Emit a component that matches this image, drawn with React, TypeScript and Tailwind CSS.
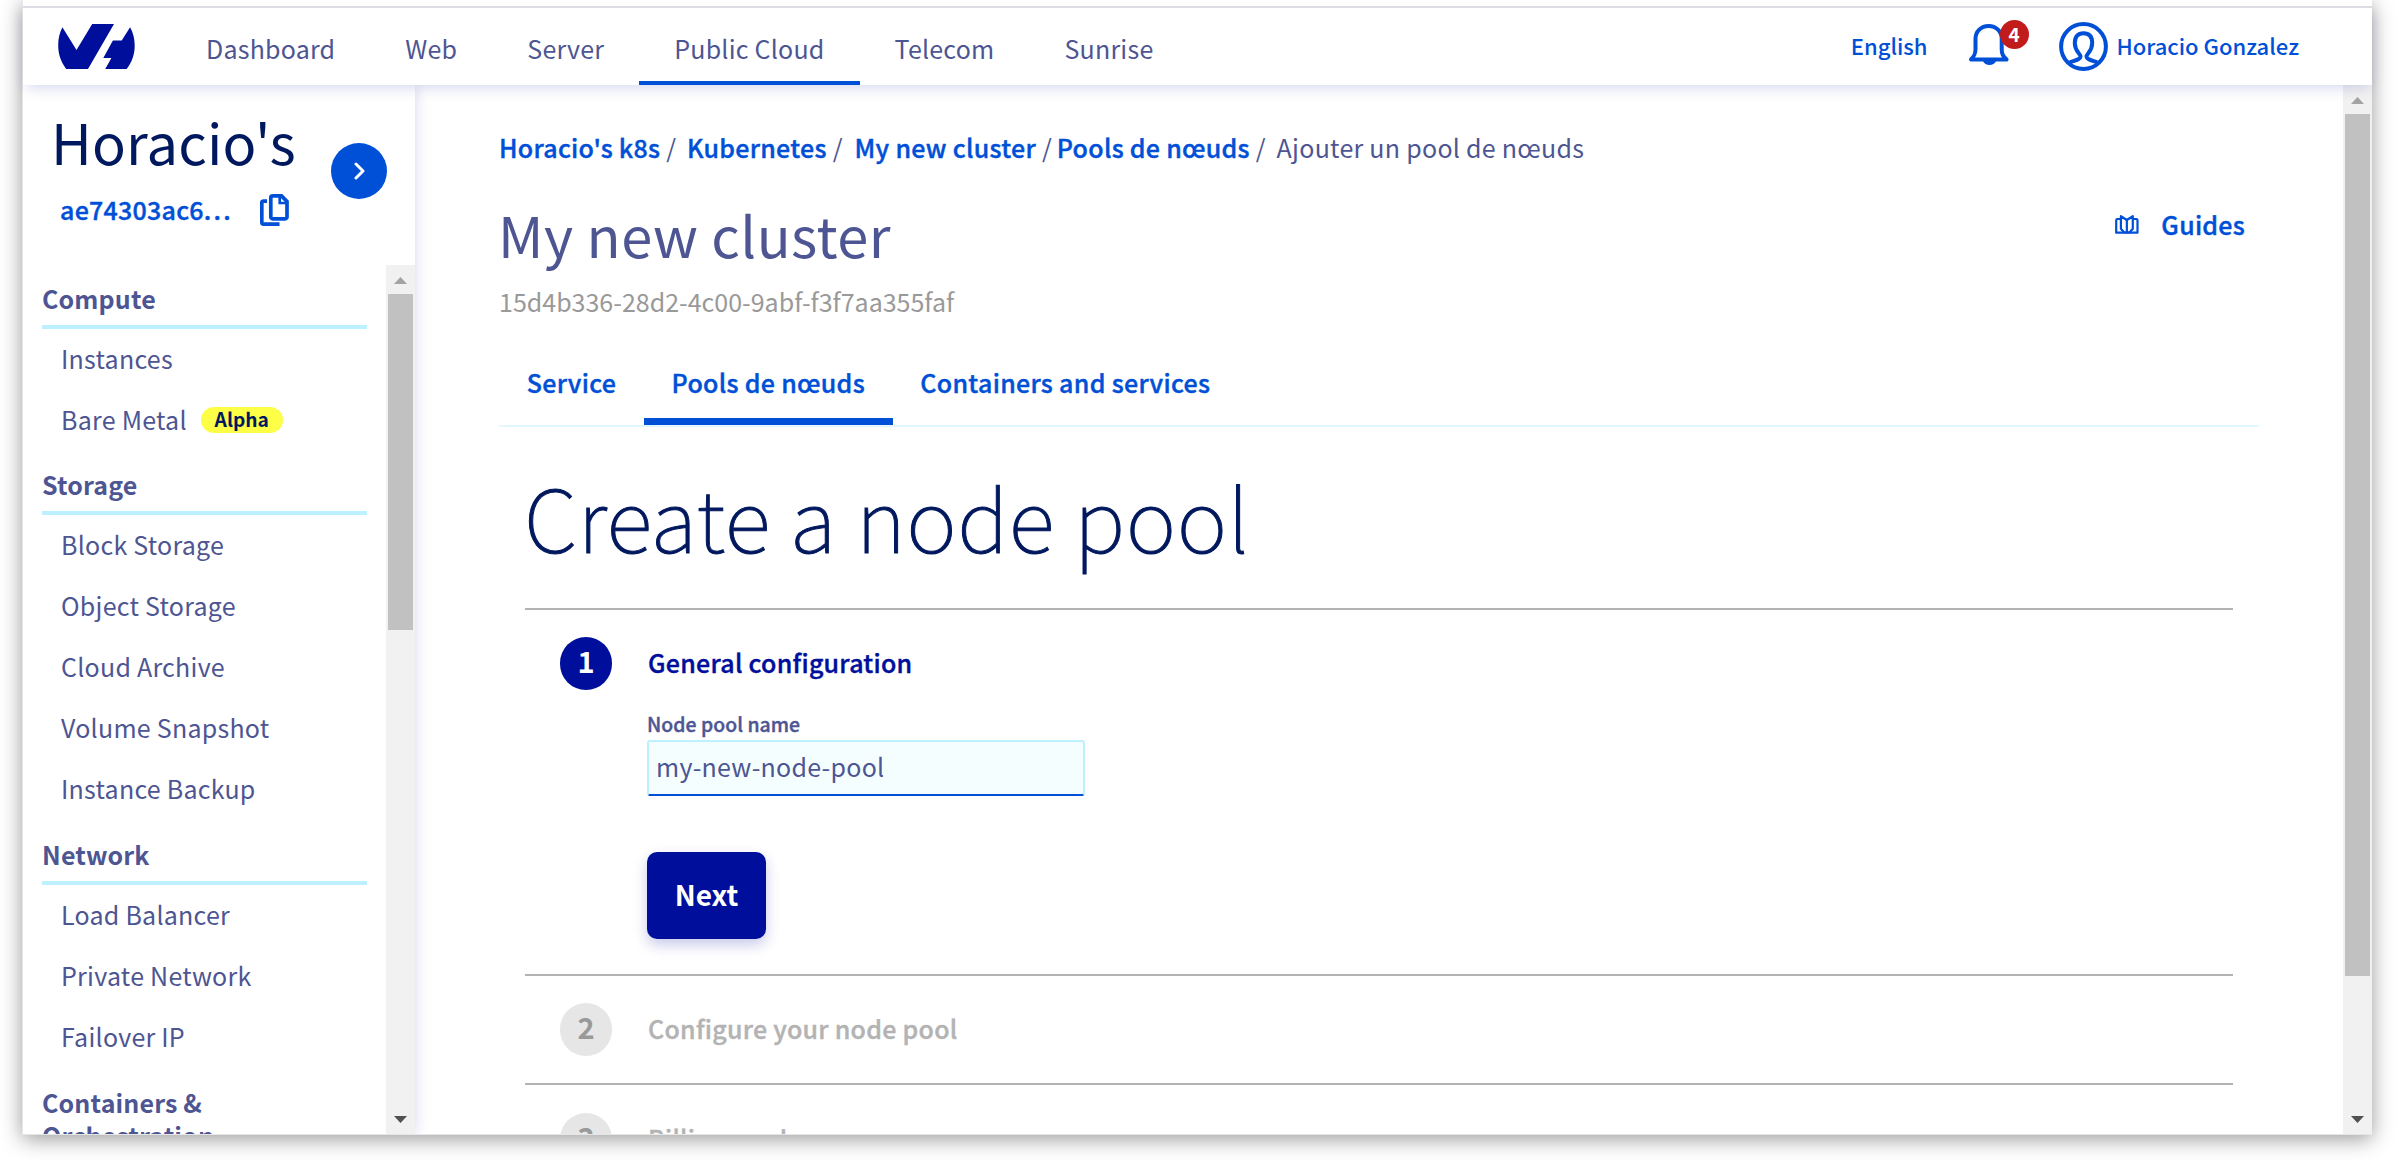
import React from 'react';

type MenuItem = { label: string; badge?: string };
type MenuSection = { title: string; items: MenuItem[]; spacing: string };

const NAV = ['Dashboard', 'Web', 'Server', 'Public Cloud', 'Telecom', 'Sunrise'];

const SECTIONS: MenuSection[] = [
  {
    title: 'Compute',
    spacing: 'mt-0',
    items: [{ label: 'Instances' }, { label: 'Bare Metal', badge: 'Alpha' }],
  },
  {
    title: 'Storage',
    spacing: 'mt-[21px]',
    items: [
      { label: 'Block Storage' },
      { label: 'Object Storage' },
      { label: 'Cloud Archive' },
      { label: 'Volume Snapshot' },
      { label: 'Instance Backup' },
    ],
  },
  {
    title: 'Network',
    spacing: 'mt-[22px]',
    items: [{ label: 'Load Balancer' }, { label: 'Private Network' }, { label: 'Failover IP' }],
  },
  { title: 'Containers & Orchestration', spacing: 'mt-[22px]', items: [] },
];

const SEMI = 'font-medium [-webkit-text-stroke:0.4px_currentColor]';

function Logo() {
  return (
    <svg width="77" height="45" viewBox="0 0 77 45" fill="#000e9c" className="block shrink-0">
      <path d="M4.4 3.3 18.5 26 34.2 0H56L30 45H8.2C2.5 37 .2 30 .2 21 .2 14 1.8 8.500 4.400 3.300Z" />
      <path d="M72.100 3.300C75 8.500 76.700 14.500 76.700 21.500 76.700 30 74.200 38 68.700 45H47.200L53.400 34H45.300L54.900 16.500H63.700Z" />
    </svg>
  );
}

function BellIcon() {
  return (
    <svg width="40" height="41" viewBox="0 0 40 41" fill="none" className="block">
      <path
        d="M2 35.500C5.500 32 6.500 30 6.500 25V15C6.500 7.500 12 2 19.600 2S32.700 7.500 32.700 15V25C32.700 30 34 32 37.500 35.500Z"
        stroke="#0050d7"
        strokeWidth="4"
        strokeLinejoin="round"
      />
      <path d="M14 37h13c-1 2.700-3.500 4-6.500 4S15 39.700 14 37Z" fill="#0050d7" />
    </svg>
  );
}

function UserIcon() {
  return (
    <svg width="49" height="49" viewBox="0 0 49 49" fill="none" stroke="#0050d7" strokeWidth="4" className="block">
      <circle cx="24.500" cy="24.500" r="22.400" />
      <path d="M10.500 40.500C15.500 38.500 21.500 37.500 21.500 34.500 21.500 31.500 15.800 29.500 15.800 21 15.800 14.500 19 11.200 24.500 11.200S33.200 14.500 33.200 21C33.200 29.500 27.500 31.500 27.500 34.500 27.500 37.500 33.500 38.500 38.500 40.500" />
    </svg>
  );
}

function CopyIcon() {
  return (
    <svg width="29" height="32" viewBox="0 0 29 32" fill="none" stroke="#0050d7" strokeWidth="3.700" className="block">
      <path d="M7 7.200H3.600A1.800 1.800 0 0 0 1.800 9V28.300a1.800 1.800 0 0 0 1.800 1.800H19.500" />
      <path d="M12.400 1.850H21.500L27 7.500V23A1.800 1.800 0 0 1 25.200 24.800H12.600A1.800 1.800 0 0 1 10.800 23V3.650A1.800 1.800 0 0 1 12.600 1.850Z" />
      <path d="M19.700 2.500V9H26.500" strokeWidth="2.600" />
    </svg>
  );
}

function BookIcon() {
  return (
    <svg width="24" height="19" viewBox="0 0 24 19" fill="none" stroke="#0050d7" strokeWidth="2.200" strokeLinejoin="round" className="block">
      <path d="M6 4H2.500A1.300 1.300 0 0 0 1.200 5.300V17.700H22.500V5.300A1.300 1.300 0 0 0 21.200 4H17.800" />
      <path d="M5.900 1.200 11.850 5 17.800 1.200V13.800L14.500 17.500H9.200L5.900 13.800Z" />
      <path d="M11.850 5V17.500" />
    </svg>
  );
}

function Arrow({ up }: { up?: boolean }) {
  return (
    <svg width="13" height="7" viewBox="0 0 13 7" className="block">
      {up ? <path d="M0 7 6.500 0 13 7Z" fill="#a3a3a3" /> : <path d="M0 0H13L6.500 7Z" fill="#505050" />}
    </svg>
  );
}

function Scrollbar({ thumb, pad }: { thumb: string; pad: string }) {
  return (
    <div className={`flex w-[29px] shrink-0 flex-col items-center bg-[#f1f1f1] pb-[11px] ${pad}`}>
      <Arrow up />
      <div className={`mt-[10px] w-[25px] bg-[#c1c1c1] ${thumb}`} />
      <div className="mt-auto">
        <Arrow />
      </div>
    </div>
  );
}

function Header() {
  return (
    <header className="relative z-20 flex h-[79px] shrink-0 items-start border-t-2 border-[#dcdce4] bg-white shadow-[0_5px_14px_-3px_rgba(0,14,156,0.18)]">
      <div className="ml-[35px] mt-[16px]">
        <Logo />
      </div>
      <nav className="ml-[36px] flex h-[77px]">
        {NAV.map((n) => (
          <a
            key={n}
            className={`border-b-4 px-[35px] text-[25px] leading-[80px] tracking-[0.220px] ${
              n === 'Public Cloud' ? 'border-[#0050d7]' : 'border-transparent'
            }`}
          >
            {n}
          </a>
        ))}
      </nav>
      <div className="ml-auto flex items-start pr-[73px] text-[22px] font-medium text-[#0050d7]">
        <span className="mt-[22px] leading-[30px]">English</span>
        <div className="relative ml-[41px] mt-[16px]">
          <BellIcon />
          <span className="absolute -top-[4px] left-[31px] flex h-[29px] w-[29px] items-center justify-center rounded-full bg-[#c11b1b] text-[19px] font-bold leading-none text-white">
            <span className="-mt-[3px]">4</span>
          </span>
        </div>
        <div className="ml-[50px] mt-[14px]">
          <UserIcon />
        </div>
        <span className="ml-[9px] mt-[22px] leading-[30px]">Horacio Gonzalez</span>
      </div>
    </header>
  );
}

function Sidebar() {
  return (
    <aside className="relative z-10 flex w-[392px] shrink-0 flex-col bg-white shadow-[0_0_14px_rgba(0,14,156,0.17)]">
      <div className="flex h-[180px] shrink-0">
        <div className="w-[308px] pl-[28px]">
          <div className="pt-[21px] text-[56px] leading-[70px] tracking-[0.200px] text-[#00185e]">Horacio&#39;s</div>
          <div className="flex pl-[9px] pt-[18px]">
            <span className={`w-[200px] text-[25px] leading-[30px] tracking-[0.250px] text-[#0050d7] ${SEMI}`}>
              ae74303ac6<span className="tracking-[2.200px]">...</span>
            </span>
            <CopyIcon />
          </div>
        </div>
        <div className="mt-[58px] flex h-[56px] w-[56px] items-center justify-center rounded-full bg-[#0050d7]">
          <svg width="12" height="18" viewBox="0 0 12 18" fill="none" className="ml-[2px] block">
            <path d="M2 2 9 9 2 16" stroke="#fff" strokeWidth="3" strokeLinecap="round" strokeLinejoin="round" />
          </svg>
        </div>
      </div>
      <div className="flex min-h-0 flex-1 overflow-hidden">
        <div className="w-[363px] pl-[19px] pr-[19px] pt-[17px]">
          {SECTIONS.map((s) => (
            <section key={s.title} className={s.spacing}>
              <h2 className="border-b-4 border-[#bef1ff] pb-[10px] pr-24 text-[25px] font-bold leading-[33px] tracking-[0.150px]">
                {s.title}
              </h2>
              <ul className="flex flex-col gap-[6px] pl-[19px] pt-[2px]">
                {s.items.map((it) => (
                  <li key={it.label} className="flex h-[55px] items-center text-[25px] leading-[55px] tracking-[0.250px]">
                    {it.label}
                    {it.badge && (
                      <span className="ml-[14px] flex h-[26px] w-[82px] items-center justify-center rounded-full bg-[#fdff46] pb-[1px] text-[19.200px] font-bold leading-[24px] tracking-normal text-[#00185e]">
                        {it.badge}
                      </span>
                    )}
                  </li>
                ))}
              </ul>
            </section>
          ))}
        </div>
        <Scrollbar pad="pt-[12px]" thumb="h-[336px]" />
      </div>
    </aside>
  );
}

function Breadcrumb() {
  return (
    <nav className="flex text-[25px] leading-[30px]">
      <a className={`tracking-[0.270px] text-[#0050d7] ${SEMI}`}>Horacio&#39;s k8s</a>
      <span className="ml-[6px]">/</span>
      <a className={`ml-[11px] tracking-[0.270px] text-[#0050d7] ${SEMI}`}>Kubernetes</a>
      <span className="ml-[6px]">/</span>
      <a className={`ml-[12px] tracking-[0.300px] text-[#0050d7] ${SEMI}`}>My new cluster</a>
      <span className="ml-[6px]">/</span>
      <a className={`ml-[5px] tracking-[0.270px] text-[#0050d7] ${SEMI}`}>Pools de nœuds</a>
      <span className="ml-[6px]">/</span>
      <span className="ml-[11px] tracking-[0.270px]">Ajouter un pool de nœuds</span>
    </nav>
  );
}

function Step({ n, title, active, children }: { n: number; title: string; active?: boolean; children?: React.ReactNode }) {
  return (
    <section className={`flex border-t-2 border-[#b3b3b3] pb-[27px] pl-[35px] ${n === 3 ? 'pt-[28px]' : 'pt-[27px]'}`}>
      <div
        className={`flex h-[53px] w-[52px] shrink-0 justify-center rounded-full text-[29px] font-bold leading-[47px] ${
          active ? 'bg-[#000e9c] text-white' : 'bg-[#e6e6e6] text-[#999999]'
        }`}
      >
        {n}
      </div>
      <div className="ml-[35px]">
        <h3
          className={`h-[53px] pl-px text-[25px] leading-[50px] tracking-[0.260px] ${SEMI} ${
            active ? 'text-[#000e9c]' : 'text-[#b3b3b3]'
          }`}
        >
          {title}
        </h3>
        {children}
      </div>
    </section>
  );
}

function Main() {
  return (
    <main className="flex min-w-0 flex-1">
      <div className="min-w-0 flex-1 overflow-hidden pl-[84px] pr-[84px] pt-[47px]">
        <Breadcrumb />
        <div className="mt-[37px] flex items-start justify-between">
          <h1 className="-ml-px text-[56px] leading-[70px] tracking-[0.450px]">My new cluster</h1>
          <a className={`mt-[10px] flex items-center pr-[14px] text-[25px] leading-[30px] tracking-[0.250px] text-[#0050d7] ${SEMI}`}>
            <BookIcon />
            <span className="ml-[22px]">Guides</span>
          </a>
        </div>
        <p className="mt-[17px] text-[25px] leading-[30px] text-[#999999]">15d4b336-28d2-4c00-9abf-f3f7aa355faf</p>
        <div className={`mt-[51px] flex border-b-2 border-[#e2f6fd] text-[25px] leading-[30px] tracking-[0.300px] text-[#0050d7] ${SEMI}`}>
          <a className="border-b-[7px] border-transparent px-[27.700px] pb-[21px]">Service</a>
          <a className="border-b-[7px] border-[#0050d7] px-[27.700px] pb-[21px]">Pools de nœuds</a>
          <a className="border-b-[7px] border-transparent px-[27.700px] pb-[21px]">Containers and services</a>
        </div>
        <div className="ml-[26px] mr-[26px]">
          <h2 className="-ml-px mt-[39px] text-[86px] font-thin leading-[100px] tracking-[0.500px] text-[#00185e] [-webkit-text-stroke:1px_currentColor]">
            Create a node pool
          </h2>
          <div className="mt-[42px]">
            <Step n={1} title="General configuration" active>
              <label className="mt-[21px] block text-[19.400px] font-medium leading-[26px] tracking-[0.050px] [-webkit-text-stroke:0.4px_currentColor]">
                Node pool name
              </label>
              <div className="mt-[3px] h-[56px] w-[438px] rounded-[3px] border-2 border-[#bef1ff] border-b-[#0050d7] bg-[#f5feff] pl-[7px] text-[25px] leading-[48px] tracking-[0.250px]">
                my-new-node-pool
              </div>
              <button className="mb-[8px] mt-[56px] block h-[87px] w-[119px] rounded-[10px] bg-[#000e9c] pb-[3px] text-[28px] font-bold leading-[84px] text-white shadow-[0_6px_14px_rgba(0,14,156,0.22)]">
                Next
              </button>
            </Step>
            <Step n={2} title="Configure your node pool" />
            <Step n={3} title="Billing mode" />
          </div>
        </div>
      </div>
      <Scrollbar pad="pt-[12px]" thumb="h-[862px]" />
    </main>
  );
}

export default function App() {
  return (
    <div className="h-[1160px] w-[2397px] overflow-hidden bg-white font-['Noto_Sans_CJK_SC','Noto_Sans',sans-serif] text-[#4d5592]">
      <div className="ml-[22px] flex h-[1135px] w-[2350px] flex-col border-b border-l border-[#e6e6e6] bg-white shadow-[0_4px_20px_rgba(0,0,0,0.4)]">
        <div className="relative z-30 h-[6px] shrink-0 bg-white" />
        <Header />
        <div className="flex min-h-0 flex-1 overflow-hidden">
          <Sidebar />
          <Main />
        </div>
      </div>
    </div>
  );
}
